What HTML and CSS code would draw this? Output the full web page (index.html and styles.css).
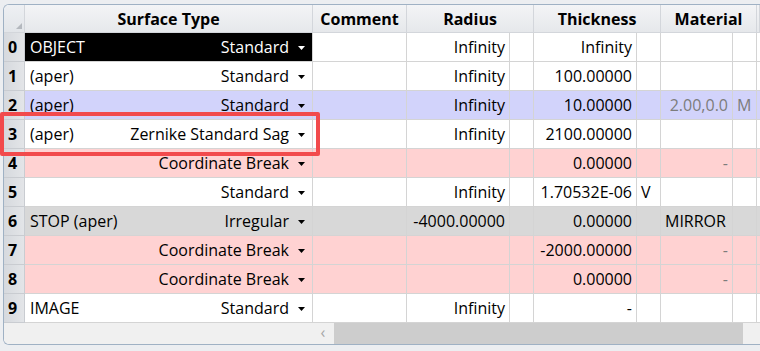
FILE: index.html
```html
<!DOCTYPE html>
<html lang="en">
<head>
  <meta charset="UTF-8" />
  <title>Lens Data</title>
  <link rel="stylesheet" href="styles.css">
</head>
<body>

<div class="sheet">
  <div class="grid">
    <!-- header -->
    <div class="hd corner"><span class="grip"></span></div>
    <div class="hd">Surface Type</div>
    <div class="hd">Comment</div>
    <div class="hd span2">Radius</div>
    <div class="hd span2">Thickness</div>
    <div class="hd span2">Material</div>
    <div class="hd"></div>

    <div class="row">
      <div class="num">0</div>
      <div class="type picked"><span>OBJECT</span><span class="kind">Standard</span><svg class="caret" width="7" height="4" viewBox="0 0 7 4"><path d="M0 0h7L3.5 4z"/></svg></div>
      <div></div>
      <div class="r">Infinity</div><div></div>
      <div class="r">Infinity</div><div></div>
      <div></div><div></div><div></div>
    </div>

    <div class="row">
      <div class="num">1</div>
      <div class="type"><span>(aper)</span><span class="kind">Standard</span><svg class="caret" width="7" height="4" viewBox="0 0 7 4"><path d="M0 0h7L3.5 4z"/></svg></div>
      <div></div>
      <div class="r">Infinity</div><div></div>
      <div class="r">100.00000</div><div></div>
      <div></div><div></div><div></div>
    </div>

    <div class="row lilac">
      <div class="num">2</div>
      <div class="type"><span>(aper)</span><span class="kind">Standard</span><svg class="caret" width="7" height="4" viewBox="0 0 7 4"><path d="M0 0h7L3.5 4z"/></svg></div>
      <div></div>
      <div class="r">Infinity</div><div></div>
      <div class="r">10.00000</div><div></div>
      <div class="r dim">2.00,0.0</div><div class="dim">M</div><div></div>
    </div>

    <div class="row">
      <div class="num">3</div>
      <div class="type"><span>(aper)</span><span class="kind">Zernike Standard Sag</span><svg class="caret" width="7" height="4" viewBox="0 0 7 4"><path d="M0 0h7L3.5 4z"/></svg></div>
      <div></div>
      <div class="r">Infinity</div><div></div>
      <div class="r">2100.00000</div><div></div>
      <div></div><div></div><div></div>
    </div>

    <div class="row pink">
      <div class="num">4</div>
      <div class="type"><span></span><span class="kind">Coordinate Break</span><svg class="caret" width="7" height="4" viewBox="0 0 7 4"><path d="M0 0h7L3.5 4z"/></svg></div>
      <div></div>
      <div></div><div></div>
      <div class="r">0.00000</div><div></div>
      <div class="r dim">-</div><div></div><div></div>
    </div>

    <div class="row">
      <div class="num">5</div>
      <div class="type"><span></span><span class="kind">Standard</span><svg class="caret" width="7" height="4" viewBox="0 0 7 4"><path d="M0 0h7L3.5 4z"/></svg></div>
      <div></div>
      <div class="r">Infinity</div><div></div>
      <div class="r">1.70532E-06</div><div>V</div>
      <div></div><div></div><div></div>
    </div>

    <div class="row grey">
      <div class="num">6</div>
      <div class="type"><span>STOP (aper)</span><span class="kind">Irregular</span><svg class="caret" width="7" height="4" viewBox="0 0 7 4"><path d="M0 0h7L3.5 4z"/></svg></div>
      <div></div>
      <div class="r">-4000.00000</div><div></div>
      <div class="r">0.00000</div><div></div>
      <div>MIRROR</div><div></div><div></div>
    </div>

    <div class="row pink">
      <div class="num">7</div>
      <div class="type"><span></span><span class="kind">Coordinate Break</span><svg class="caret" width="7" height="4" viewBox="0 0 7 4"><path d="M0 0h7L3.5 4z"/></svg></div>
      <div></div>
      <div></div><div></div>
      <div class="r">-2000.00000</div><div></div>
      <div class="r dim">-</div><div></div><div></div>
    </div>

    <div class="row pink">
      <div class="num">8</div>
      <div class="type"><span></span><span class="kind">Coordinate Break</span><svg class="caret" width="7" height="4" viewBox="0 0 7 4"><path d="M0 0h7L3.5 4z"/></svg></div>
      <div></div>
      <div></div><div></div>
      <div class="r">0.00000</div><div></div>
      <div class="r dim">-</div><div></div><div></div>
    </div>

    <div class="row">
      <div class="num">9</div>
      <div class="type"><span>IMAGE</span><span class="kind">Standard</span><svg class="caret" width="7" height="4" viewBox="0 0 7 4"><path d="M0 0h7L3.5 4z"/></svg></div>
      <div></div>
      <div class="r">Infinity</div><div></div>
      <div class="r">-</div><div></div>
      <div></div><div></div><div></div>
    </div>
  </div>

  <!-- horizontal scrollbar -->
  <div class="hscroll">
    <div class="frozen"></div>
    <div class="arrow">&lsaquo;</div>
    <div class="thumb"></div>
    <div class="rest"></div>
  </div>
</div>

<!-- highlight around surface 3 -->
<div class="callout"></div>

</body>
</html>
```

FILE: styles.css
```css
html, body {
  margin: 0;
  padding: 0;
  overflow: hidden;
}

body {
  position: relative;
  width: 760px;
  height: 351px;
  background: #eceef1;
  font-family: "Open Sans", "Noto Sans", sans-serif;
  font-size: 16px;
  color: #000;
}

.sheet {
  margin: 4px 0 0 3px;
  width: 757px;
  box-sizing: border-box;
  border: 1px solid #9fb1c4;
  border-right: none;
  border-radius: 6px 0 0 6px;
  background: #fff;
  overflow: hidden;
}

.grid {
  display: grid;
  grid-template-columns: 21px 288px 94px 103px 24px 103px 24px 72px 24px 3px;
}

.hd {
  height: 28px;
  box-sizing: border-box;
  border-right: 1px solid #d3d6db;
  border-bottom: 1px solid #d3d6db;
  background: linear-gradient(#f3f4f6, #e6e8eb);
  font-weight: bold;
  text-align: center;
  line-height: 28px;
}

.hd.span2 {
  grid-column: span 2;
}

.hd.corner {
  position: relative;
  background: linear-gradient(#eef0f3, #e2e5e9);
}

.grip {
  position: absolute;
  right: 2px;
  bottom: 3px;
  width: 0;
  height: 0;
  border-left: 6px solid transparent;
  border-bottom: 6px solid #b4b8be;
}

.row {
  display: contents;
}

.row > div {
  height: 29px;
  box-sizing: border-box;
  padding: 1px 3px 0 4px;
  border-right: 1px solid #d4d4d4;
  border-bottom: 1px solid #d4d4d4;
  background: #fff;
  line-height: 27px;
  white-space: nowrap;
  overflow: hidden;
}

.row > .num {
  padding: 1px 0 0 4px;
  background: linear-gradient(90deg, #d6d9de, #e3e5e8);
  border-right: 1px solid #c9ccd1;
  border-bottom: 1px solid #c9ccd1;
  font-weight: bold;
}

.row > .type {
  display: flex;
  align-items: center;
  padding: 1px 7px 0 5px;
}

.type .kind {
  margin-left: auto;
}

.caret {
  margin-left: 9px;
  fill: #000;
}

.row > .type.picked {
  background: #000;
  color: #fff;
}

.type.picked .caret {
  fill: #fff;
}

.row > .r {
  text-align: right;
  padding: 1px 4px 0 0;
}

.row > .dim {
  color: #7c7c7c;
}

.row.lilac > div:not(.num) {
  background: #d2d3fb;
}

.row.pink > div:not(.num) {
  background: #ffd2d2;
}

.row.grey > div:not(.num) {
  background: #d8d8d8;
}

.hscroll {
  display: flex;
  height: 21px;
  background: #f0f0f0;
}

.frozen {
  width: 308px;
}

.arrow {
  width: 22px;
  text-align: center;
  line-height: 19px;
  color: #a6a6a6;
  font-size: 16px;
}

.thumb {
  width: 409px;
  background: #cdcdcd;
}

.rest {
  flex: 1;
}

.callout {
  position: absolute;
  left: 0;
  top: 112px;
  width: 320px;
  height: 44px;
  box-sizing: border-box;
  border: 4px solid #f24a4c;
  border-radius: 2px;
}
```
